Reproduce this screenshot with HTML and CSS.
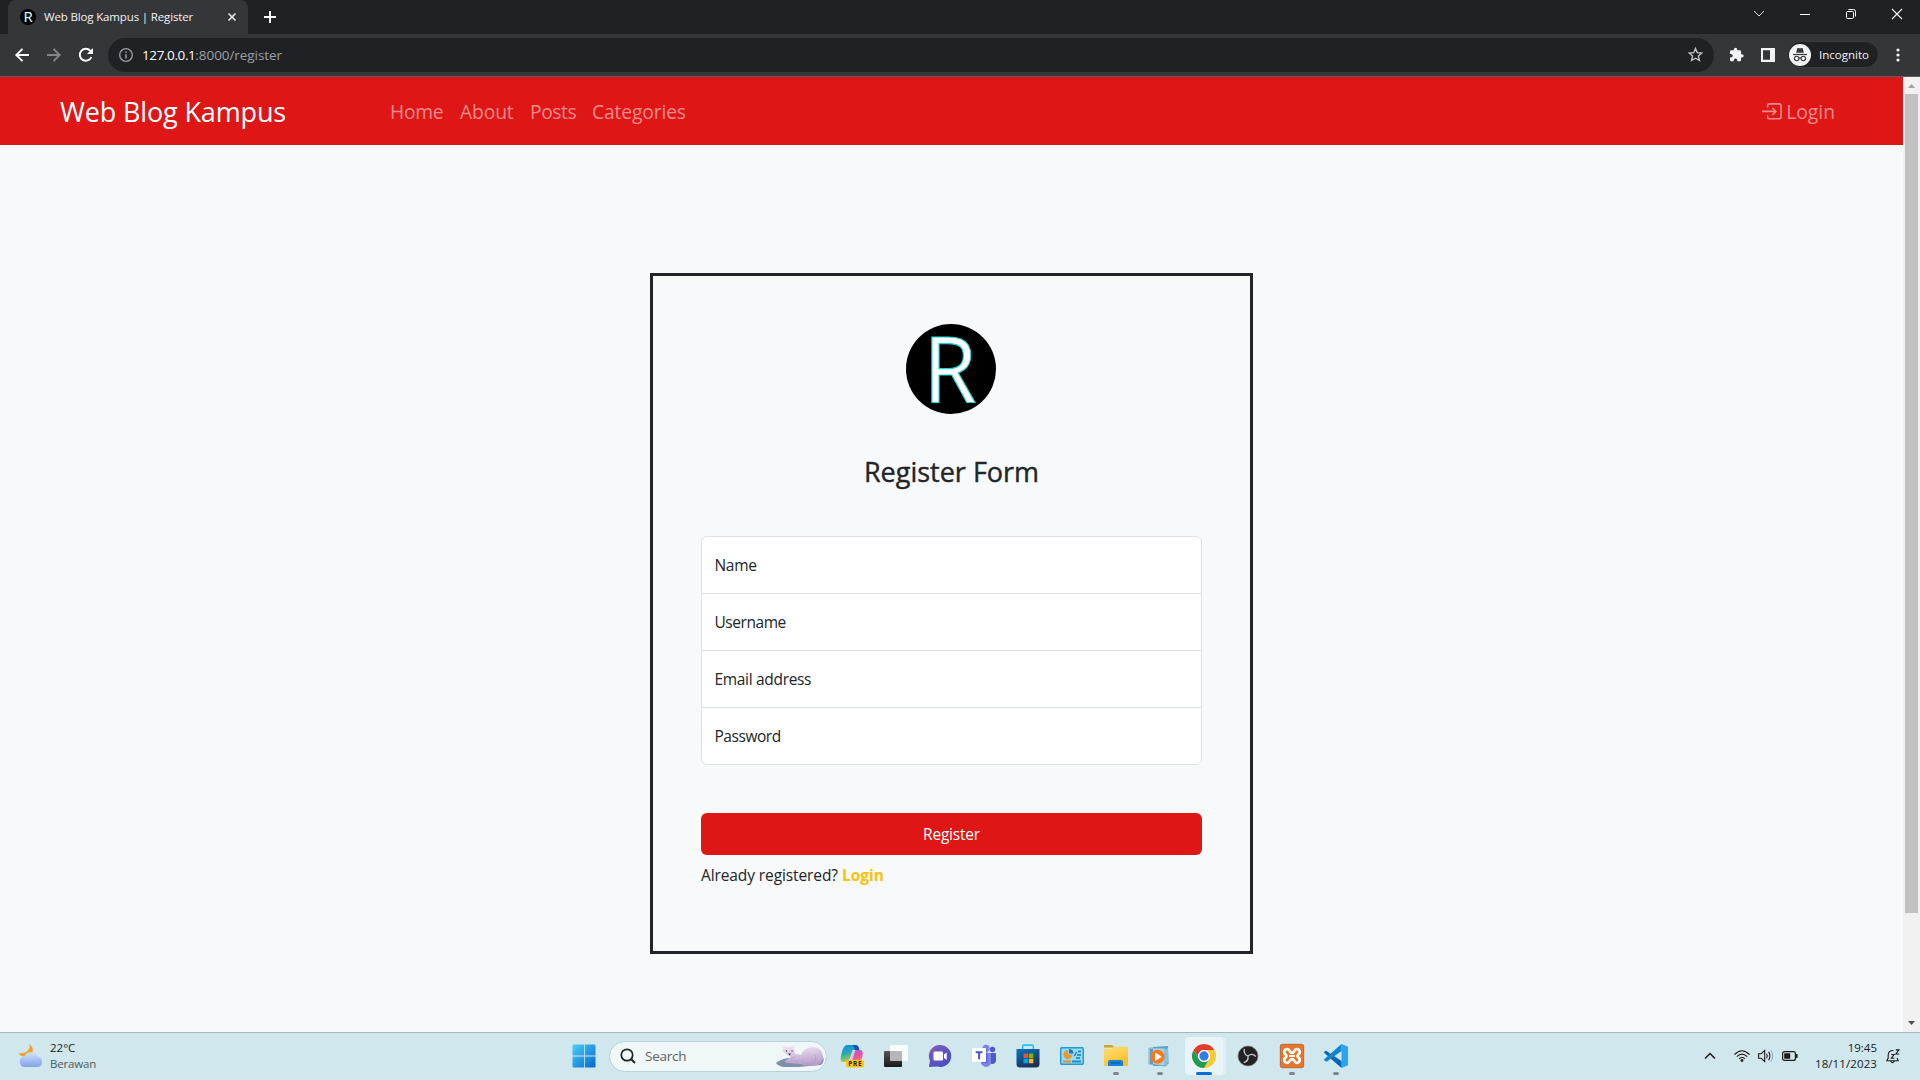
FILE: index.html
```html
<!DOCTYPE html>
<html lang="id">
<head>
<meta charset="utf-8">
<title>Web Blog Kampus | Register</title>
<link rel="stylesheet" href="styles.css">
</head>
<body>
<div class="desktop">
  <header class="tabstrip">
    <div class="tab">
      <svg class="favicon" viewBox="0 0 90 90"><circle cx="45" cy="45" r="45" fill="#000"/><text class="logo-letter small-letter" x="20" y="75" textLength="52" lengthAdjust="spacingAndGlyphs">R</text></svg>
      <span class="tab-title">Web Blog Kampus | Register</span>
      <svg class="tab-close" viewBox="0 0 8 8"><path d="M.5.5l7 7M7.500.5l-7 7" stroke="#e8eaed" stroke-width="1.6"/></svg>
    </div>
    <svg class="new-tab" viewBox="0 0 12 12"><path d="M6 0v12M0 6h12" stroke="#fff" stroke-width="1.9"/></svg>
    <div class="window-buttons">
      <svg viewBox="0 0 10 10"><path d="M0 2l5 5 5-5" fill="none" stroke="#ddd"/></svg>
      <svg viewBox="0 0 10 10"><path d="M0 5.500h10" stroke="#fff"/></svg>
      <svg viewBox="0 0 10 10"><rect x=".5" y="2.500" width="7" height="7" rx="1.200" fill="none" stroke="#fff"/><path d="M2.500.5h5a2 2 0 012 2v5" fill="none" stroke="#fff"/></svg>
      <svg viewBox="0 0 10 10"><path d="M0 0l10 10M10 0L0 10" stroke="#fff" stroke-width="1.100"/></svg>
    </div>
  </header>
  <div class="toolbar">
    <div class="nav-buttons">
      <svg viewBox="0 0 14 14"><path d="M14 7H1.500M7.500.8L1.300 7l6.200 6.200" fill="none" stroke="#fff" stroke-width="1.900"/></svg>
      <svg viewBox="0 0 14 14"><path d="M0 7h12.500M6.500.8L12.700 7l-6.200 6.200" fill="none" stroke="#85868a" stroke-width="1.900"/></svg>
      <svg viewBox="0 0 14 14"><path d="M12.400 9A6 6 0 1111.400 2.900L12.500 4.200" fill="none" stroke="#fff" stroke-width="1.900"/><path d="M14 0v6H8z" fill="#fff"/></svg>
    </div>
    <div class="omnibox">
      <svg class="info" viewBox="0 0 14 14"><circle cx="7" cy="7" r="6.300" fill="none" stroke="#9aa0a6" stroke-width="1.300"/><path d="M7 6.200v4.300M7 3.500v1.600" stroke="#9aa0a6" stroke-width="1.500"/></svg>
      <span class="url"><span class="host">127.0.0.1</span><span class="path">:8000/register</span></span>
      <svg class="star" viewBox="0 0 14 14"><path d="M7 1.300l1.600 3.900 4.300.4-3.200 2.800 1 4.200L7 10.400l-3.700 2.200 1-4.200L1.100 5.600l4.300-.4z" fill="none" stroke="#c4c7ca" stroke-width="1.200"/></svg>
    </div>
    <svg class="puzzle" viewBox="1 0 22 23"><path d="M20.500 11H19V7a2 2 0 00-2-2h-4V3.500a2.500 2.500 0 00-5 0V5H4a2 2 0 00-2 2v3.800h1.500a2.700 2.700 0 010 5.400H2V20a2 2 0 002 2h3.800v-1.500a2.700 2.700 0 015.400 0V22H17a2 2 0 002-2v-4h1.500a2.500 2.500 0 000-5z" fill="#f1f3f4"/></svg>
    <svg class="panel" viewBox="0 0 14 14"><path d="M0 0h14v14H0zM2 2.200v9.600h7V2.200z" fill="#f1f3f4" fill-rule="evenodd"/></svg>
    <div class="incognito">
      <svg viewBox="0 0 22 22"><circle cx="11" cy="11" r="11" fill="#f1f3f4"/><path d="M7.200 8.800l1-4.200q.2-.7 1-.5l1.800.5 1.800-.5q.8-.2 1 .5l1 4.200z" fill="#35363a"/><path d="M4 10.500h14" stroke="#35363a" stroke-width="1.200"/><g fill="none" stroke="#35363a" stroke-width="1.100"><circle cx="7.700" cy="14.500" r="2.200"/><circle cx="14.300" cy="14.500" r="2.200"/><path d="M9.900 14.200q1.100-.8 2.200 0"/></g></svg>
      <span class="incognito-label">Incognito</span>
    </div>
    <svg class="dots" viewBox="0 0 4 14"><g fill="#f1f3f4"><circle cx="2" cy="2" r="1.600"/><circle cx="2" cy="7" r="1.600"/><circle cx="2" cy="12" r="1.600"/></g></svg>
  </div>
  <div class="viewport">
    <div class="page">
      <nav class="navbar">
        <a class="brand">Web Blog Kampus</a>
        <div class="links">
          <a class="l-home">Home</a><a class="l-about">About</a><a class="l-posts">Posts</a><a class="l-cat">Categories</a>
        </div>
        <a class="nav-login">
          <svg viewBox="0 0 20 17"><path d="M5.600 4.500V2.600Q5.600.9 7.300.9h10Q19 .9 19 2.600v11.500q0 1.700-1.700 1.700h-10q-1.700 0-1.700-1.700v-1.900M0 8.400h13.500M10.300 4.800l3.600 3.600-3.600 3.600" fill="none" stroke="#f08b8b" stroke-width="1.600"/></svg>
          <span class="nav-login-text">Login</span>
        </a>
      </nav>
      <main class="main">
        <form class="card">
          <svg class="logo" viewBox="0 0 90 90"><circle cx="45" cy="45" r="45" fill="#000"/><text class="logo-letter" x="17.500" y="78" textLength="53" lengthAdjust="spacingAndGlyphs">R</text></svg>
          <h1 class="title">Register Form</h1>
          <div class="fields">
            <label class="f-name">Name</label>
            <label class="f-user">Username</label>
            <label class="f-email">Email address</label>
            <label class="f-pass">Password</label>
          </div>
          <button class="submit" type="button">Register</button>
          <p class="hint"><span class="hint-text">Already registered?</span><a class="hint-link">Login</a></p>
        </form>
      </main>
    </div>
    <div class="scrollbar">
      <svg viewBox="0 0 17 17"><path d="M5 11h7L8.500 7z" fill="#a3a3a3"/></svg>
      <div class="thumb"></div>
      <svg viewBox="0 0 17 17"><path d="M5 6h7l-3.500 4z" fill="#505050"/></svg>
    </div>
  </div>
  <footer class="taskbar">
    <div class="weather">
      <svg viewBox="0 0 24 24"><defs><linearGradient id="cl" x2="0" y2="1"><stop offset="0" stop-color="#d3e1fb"/><stop offset="1" stop-color="#7fa3e6"/></linearGradient></defs><path d="M10.500 0q5 4 2.500 9-4 6-11.500 2.500Q0 10.500.5 9q7 1 9.500-4 1-2.500.5-5z" fill="#f59f24"/><path d="M5.500 23a5.300 5.300 0 01-.3-10.500 7.200 7.200 0 0113.200 0A5.300 5.300 0 0118.500 23z" fill="url(#cl)"/></svg>
      <div class="lines"><span class="w-temp">22°C</span><span class="w-desc">Berawan</span></div>
    </div>
    <div class="apps">
      <div class="app"><svg viewBox="0 0 24 24"><defs><linearGradient id="wn" gradientUnits="userSpaceOnUse" x1="0" y1="0" x2="24" y2="24"><stop offset="0" stop-color="#4fd0fb"/><stop offset="1" stop-color="#0067cb"/></linearGradient></defs><path d="M1.500.5h10.700v11H.5v-10a1 1 0 011-1zM13 .5h9.500a1 1 0 011 1v10H13zM.5 12.400h11.700v11.100H1.500a1 1 0 01-1-1zM13 12.400h10.500v10.100a1 1 0 01-1 1H13z" fill="url(#wn)"/></svg></div>
      <div class="search">
        <svg class="glass" viewBox="0 0 16 16"><circle cx="7" cy="7" r="5.700" fill="none" stroke="#222" stroke-width="1.700"/><path d="M11 11l4 4" stroke="#222" stroke-width="2" /></svg>
        <span class="search-text">Search</span>
        <svg class="bear" viewBox="0 0 48 22"><defs><linearGradient id="br" x2=".2" y2="1"><stop offset="0" stop-color="#f6e9f6"/><stop offset="1" stop-color="#b8a0cc"/></linearGradient></defs><path d="M0 18q5-4 12-5l34-2q4 4-1 9l-23 2H8q-6-1-8-4z" fill="#7e91a9"/><path d="M25 10q2-7 11-8 10 0 11 9 0 7-5 9-12 2-18-1l-12-1q-3 0-3-2l6-4-5-3Q5 6 7 4 5 1 7.500.8q2-.3 2.500 1.200l5-.5q1.500-2 3-.5 1 1 0 2.500 1 3 1 5 3 0 6 1.500z" fill="url(#br)"/><path d="M10 17q7-2 12-1m3-1q3 4 9 3 8-2 5-8M14 13q3 1 5-1" fill="none" stroke="#b59dc6" stroke-width=".9"/><path d="M12 8.500h3l-1.300 2z" fill="#333"/><circle cx="10.500" cy="6" r=".7" fill="#333"/><circle cx="16" cy="6" r=".7" fill="#333"/></svg>
      </div>
      <div class="app"><svg viewBox="0 0 24 24"><defs><linearGradient id="ca" x2=".3" y2="1"><stop offset="0" stop-color="#1687dc"/><stop offset=".5" stop-color="#22a8b8"/><stop offset="1" stop-color="#b5cf3c"/></linearGradient><linearGradient id="cb" x2=".3" y2="1"><stop offset="0" stop-color="#a45cf0"/><stop offset=".5" stop-color="#e452a3"/><stop offset="1" stop-color="#ff8a50"/></linearGradient></defs><path d="M7 1h8.500q2.500 0 3.300 3l.5 2H15q-2 0-2.700 2.500L10 15.500q-.8 2.500-3 2.500H3.500q-3.500 0-2.800-4.500Q2 6 4 3q1-2 3-2z" fill="url(#ca)"/><path d="M12.300 1h3.200q2.500 0 3.300 3l.5 2H15q-1-4-2.700-5z" fill="#1b4fb8"/><path d="M15.500 6H20q3 0 2.700 4-.7 6-2.300 9-1 2-3.400 2H9q-2 0-2.500-2.500l-.3-.8Q9 18 10 15.500L12.300 8.500Q13 6 15.500 6z" fill="url(#cb)"/><path d="M15.500 6h-3L9.500 15.500q-.6 2-2 2.400h3q1.300-.5 1.800-2z" fill="#d9eef5" opacity=".75"/><rect x="6" y="16" width="18" height="7.500" rx="2" fill="#ffc60a"/><text class="pre" x="8.200" y="22" textLength="13.500">PRE</text></svg></div>
      <div class="app"><svg viewBox="0 0 24 24"><defs><linearGradient id="tv" x2="0" y2="1"><stop offset="0" stop-color="#555"/><stop offset="1" stop-color="#181818"/></linearGradient></defs><rect y="7" width="18" height="16" rx="1" fill="url(#tv)"/><rect x="6" y="1" width="18" height="16" rx="1" fill="#fff" fill-opacity=".86"/><path d="M6 7h12v10H6z" fill="#aaa" opacity=".8"/></svg></div>
      <div class="app"><svg viewBox="0 0 24 24"><defs><linearGradient id="ch" x2=".8" y2="1"><stop offset="0" stop-color="#9b5aa8"/><stop offset=".4" stop-color="#6458c4"/><stop offset="1" stop-color="#4750c0"/></linearGradient></defs><path d="M12 1a11 11 0 11-3 21.500L1.500 23q-.8 0-.5-1l1-5A11 11 0 0112 1z" fill="url(#ch)"/><rect x="5.500" y="7.500" width="9.500" height="9" rx="1.300" fill="#fff"/><path d="M16 10.500l2.700-2v7.500L16 14z" fill="#fff"/></svg></div>
      <div class="app"><svg viewBox="0 0 24 24"><circle cx="20.500" cy="5.500" r="2.700" fill="#5059c9"/><circle cx="14" cy="4.200" r="3.500" fill="#7b83eb"/><path d="M18 9h6v7q0 4-4 4-2 0-2-1z" fill="#5059c9"/><path d="M9 9h10v8.500q0 5-5 5.500-4-.5-5-4z" fill="#7b83eb"/><path d="M14 6h1.500v13H10v-2h4z" fill="#4146a8" opacity=".5"/><rect y="4" width="14" height="14" rx=".8" fill="#fff"/><path d="M3.700 7.300h6.800v1.900H8.100v6H6.100v-6H3.700z" fill="#4b53bc"/></svg></div>
      <div class="app"><svg viewBox="0 0 24 24"><defs><linearGradient id="st" x2=".5" y2="1"><stop offset="0" stop-color="#0875c4"/><stop offset="1" stop-color="#1c3158"/></linearGradient></defs><path d="M6.700 6V2q0-.9.900-.9h8.800q.9 0 .9.900v4" fill="none" stroke="#2bc0f2" stroke-width="1.600"/><path d="M.5 5h23v15q0 3.500-3.500 3.500H4Q.5 23.500.5 20z" fill="url(#st)"/><path d="M7.500 9.500H12V14H7.500z" fill="#f25022"/><path d="M12.800 9.500h4.500V14h-4.500z" fill="#7fba00"/><path d="M7.500 14.800H12v4.500H7.500z" fill="#00a4ef"/><path d="M12.800 14.800h4.500v4.500h-4.500z" fill="#ffb900"/></svg></div>
      <div class="app"><svg viewBox="0 0 24 24"><rect x=".7" y="3.700" width="22.600" height="16.600" rx="1" fill="#8fddf8" stroke="#2796cf" stroke-width="1.400"/><path d="M8 6a4.500 4.500 0 104.500 4.500H8z" fill="#f7941d"/><path d="M9 5a4.500 4.500 0 014.500 4.500H9z" fill="#1976c5"/><path d="M14.500 12l2-4M18 7.500h3M17 11h4M16 14h4" stroke="#1976c5" stroke-width="1.300"/><path d="M3 17.500h8" stroke="#f28a1c" stroke-width="2"/><path d="M12 17.500h9" stroke="#2089cf" stroke-width="2"/></svg></div>
      <div class="app"><svg viewBox="0 0 24 24"><defs><linearGradient id="fe" x2=".5" y2="1"><stop offset="0" stop-color="#ffe07a"/><stop offset="1" stop-color="#f9c026"/></linearGradient></defs><path d="M0 2q0-1 1-1h7l2.500 2.500H0z" fill="#dba114"/><path d="M0 5h7l3-2.300h13q1 0 1 1V21q0 1-1 1H1q-1 0-1-1z" fill="url(#fe)"/><path d="M4 22v-4q0-2 2-2h11q2 0 2 2v4z" fill="#1b7fd3"/><path d="M7 19h9" stroke="#0b5da6" stroke-width="1.300"/></svg><i class="dot"></i></div>
      <div class="app"><svg viewBox="0 0 24 24"><path d="M5 3l15-1 1 17-3 3H5z" fill="#5ba3c9"/><path d="M1 4h16v18l-16-2z" fill="#a9d3e9" stroke="#5b9fc4" stroke-width=".7"/><path d="M18 5v16M20 4v15" stroke="#d2edf8" stroke-width=".8"/><path d="M2 5h3v15H2z" fill="#5f9dc3"/><circle cx="9.500" cy="12.700" r="7" fill="#f47a1f"/><path d="M7.200 8.500l6.700 4.200-6.700 4.200z" fill="#fff"/></svg><i class="dot"></i></div>
      <div class="app active"><svg viewBox="0 0 48 48"><circle cx="24" cy="24" r="24" fill="#fff"/><path d="M3.200 12A24 24 0 0144.800 12H24a12 12 0 00-10.400 18z" fill="#e33b2e"/><path d="M44.800 12A24 24 0 0124 48l10.400-18A12 12 0 0024 12z" fill="#fcc934"/><path d="M24 48A24 24 0 013.200 12l10.400 18a12 12 0 0020.800 0z" fill="#1e9e4c"/><circle cx="24" cy="24" r="11.800" fill="#fff"/><circle cx="24" cy="24" r="9.300" fill="#2f7de9"/></svg><i class="dot wide"></i></div>
      <div class="app"><svg viewBox="0 0 24 24"><circle cx="12" cy="12" r="10" fill="#222124" stroke="#777" stroke-width=".8"/><g fill="none" stroke="#c9c9cc" stroke-width="1.300"><path d="M12 12q-5-2-3.500-7"/><path d="M12 12q-5-2-3.500-7" transform="rotate(120 12 12)"/><path d="M12 12q-5-2-3.500-7" transform="rotate(240 12 12)"/></g></svg></div>
      <div class="app"><svg viewBox="0 0 24 24"><rect x=".3" y=".3" width="23.400" height="23.400" rx="2" fill="#ea7529" stroke="#ae5a2c" stroke-width=".8"/><path d="M8 5.300c-3.500-.7-5 3.200-2.500 5 1.300.9 1.300 2.500 0 3.400-2.500 1.800-1 5.700 2.500 5 2-.5 1.500-3.500 4-3.500s2 3 4 3.500c3.500.7 5-3.200 2.500-5-1.300-.9-1.300-2.500 0-3.400 2.500-1.800 1-5.700-2.500-5-2 .5-1.500 3.500-4 3.500s-2-3-4-3.500z" fill="none" stroke="#fff" stroke-width="2.700"/><path d="M9 12h6" stroke="#fff" stroke-width="2"/></svg><i class="dot"></i></div>
      <div class="app"><svg viewBox="0 0 24 24"><path d="M17.500 0L24 2.800v18.400L17.500 24z" fill="#2aa4ef"/><path d="M1.700 6.600L.4 7.700q-.6.600 0 1.300L17.500 24V17z" fill="#0067b3"/><path d="M1.700 17.400L.4 16.300q-.6-.6 0-1.300L17.500 0v7L3 17.400q-.6.400-1.300 0z" fill="#1183cf"/></svg><i class="dot"></i></div>
    </div>
    <div class="tray">
      <svg class="t-chev" viewBox="0 0 12 8"><path d="M1 6.500l5-5 5 5" fill="none" stroke="#1b1b1b" stroke-width="1.500"/></svg>
      <svg class="t-wifi" viewBox="0 0 16 12"><g fill="none" stroke="#1b1b1b" stroke-width="1.100"><path d="M.5 4.500q7.500-7.600 15 0M2.800 6.700q5.200-5 10.400 0M5.200 8.800q2.800-2.500 5.600 0"/></g><circle cx="8" cy="10.500" r="1.400" fill="#1b1b1b"/></svg>
      <svg class="t-vol" viewBox="0 0 16 14"><g fill="none" stroke="#1b1b1b" stroke-width="1.100"><path d="M.6 4.700h2.600L6.700 1.400v11.200L3.200 9.300H.6zM8.600 4.700q1.300 2.300 0 4.600M10.600 2.800q2.500 4.200 0 8.400"/><path d="M12.700 1.200q4 5.800 0 11.600" stroke="#9cb1b7"/></g></svg>
      <svg class="t-bat" viewBox="0 0 16 10"><rect x=".6" y=".6" width="12.800" height="8.800" rx="2" fill="none" stroke="#1b1b1b" stroke-width="1.200"/><rect x="2.200" y="2.200" width="6" height="5.600" rx=".5" fill="#1b1b1b"/><path d="M14.800 3v4" stroke="#1b1b1b" stroke-width="1.500"/></svg>
      <div class="lines clock"><span class="c-time">19:45</span><span class="c-date">18/11/2023</span></div>
      <svg class="t-bell" viewBox="0 0 14 15"><path d="M7.500 1.500Q2.500 1.200 2.200 6v3L.8 11.700h11.400L11 9M4.700 12q1.800 3.500 3.700 0" fill="none" stroke="#1b1b1b" stroke-width="1.100"/><path d="M5.300 5.500h2.800L5.300 9.200h3M9.800.9h3.200L9.800 5H13.200" fill="none" stroke="#1b1b1b" stroke-width="1.100"/></svg>
    </div>
  </footer>
</div>
</body>
</html>
```
FILE: styles.css
```css
* { box-sizing: border-box; }
body {
  margin: 0;
  font-family: "Open Sans", "Noto Sans", sans-serif;
  color: #212529;
  white-space: nowrap;
}
svg { display: block; flex: none; overflow: visible; }
.desktop {
  width: 1920px;
  height: 1080px;
  display: flex;
  flex-direction: column;
  overflow: hidden;
}

/* Browser window */
.tabstrip {
  height: 34px;
  flex: none;
  display: flex;
  align-items: center;
  padding-left: 8px;
  background: #202124;
}
.tab {
  width: 240px;
  height: 34px;
  display: flex;
  align-items: center;
  padding: 0 12px;
  border-radius: 8px 8px 0 0;
  background: #35363a;
}
.favicon { width: 16px; height: 16px; margin-right: 8px; }
.tab-title { color: #f1f3f4; font-size: 11.5px; letter-spacing: -.15px; flex: 1; padding-bottom: 2px; }
.tab-close { width: 8px; height: 8px; }
.new-tab { width: 12px; height: 12px; margin-left: 16px; }
.window-buttons { display: flex; gap: 36px; margin-left: auto; padding: 0 18px 6px 0; }
.window-buttons svg { width: 10px; height: 10px; }
.toolbar {
  height: 43px;
  flex: none;
  display: flex;
  align-items: center;
  padding: 0 20px 1px 15px;
  background: #35363a;
  border-bottom: 1px solid #5b5c60;
}
.nav-buttons { display: flex; gap: 18px; margin-right: 15px; }
.nav-buttons svg { width: 14px; height: 14px; }
.omnibox {
  width: 1606px;
  height: 34px;
  display: flex;
  align-items: center;
  padding: 0 11px;
  border-radius: 17px;
  background: #202124;
}
.info { width: 14px; height: 14px; margin-right: 9px; }
.url { flex: 1; display: flex; font-size: 13.5px; }
.host { color: #fff; letter-spacing: -.4px; }
.path { color: #9aa0a6; letter-spacing: -.06px; }
.star { width: 15px; height: 15px; }
.puzzle { width: 15px; height: 15px; margin-left: 15px; }
.panel { width: 14px; height: 14px; margin-left: 17px; }
.incognito {
  width: 92px;
  height: 27px;
  display: flex;
  align-items: center;
  gap: 8px;
  margin-left: 12px;
  padding-left: 1px;
  border: 1px solid #3c3d41;
  border-radius: 14px;
  background: #202124;
}
.incognito svg { width: 22px; height: 22px; }
.incognito-label { color: #f1f3f4; font-size: 11.5px; }
.dots { width: 4px; height: 14px; margin-left: auto; }

/* Page */
.viewport { flex: 1; display: flex; min-height: 0; }
.page { flex: 1; display: flex; flex-direction: column; background: #f8f9fb; }
.navbar {
  height: 68px;
  flex: none;
  display: flex;
  align-items: center;
  padding: 0 68px 0 60px;
  background: #df1616;
}
.brand { width: 330px; color: #fff; font-size: 27px; letter-spacing: -.15px; }
.links { display: flex; font-size: 19.3px; color: #f08b8b; letter-spacing: -.15px; }
.l-home { width: 70px; letter-spacing: -.3px; }
.l-about { width: 70px; }
.l-posts { width: 62px; letter-spacing: -.45px; }
.nav-login { display: flex; align-items: center; gap: 4px; margin-left: auto; font-size: 19.3px; color: #f08b8b; }
.nav-login svg { width: 20px; height: 17px; }
.main { flex: 1; display: flex; justify-content: center; align-items: flex-start; padding-top: 128px; }
.card {
  width: 603px;
  height: 681px;
  display: flex;
  flex-direction: column;
  padding: 48px;
  border: 3px solid #212529;
}
.logo { width: 90px; height: 90px; align-self: center; margin-right: 1px; }
.logo-letter {
  font: 500 92px "Open Sans", sans-serif;
  fill: #fff;
  stroke: #19d3d6;
  stroke-width: 1.2px;
}
.small-letter { font-size: 84px; }
.title {
  height: 34px;
  margin: 41px 0 47px;
  text-align: center;
  font-size: 27px;
  line-height: 34px;
  font-weight: 500;
  -webkit-text-stroke: .4px #212529;
}
.fields {
  border: 1px solid #dee2e6;
  border-radius: 6px;
  background: #fff;
}
.fields label {
  display: block;
  height: 57px;
  padding-left: 12.5px;
  font-size: 15.5px;
  letter-spacing: -.45px;
  line-height: 57px;
  border-bottom: 1px solid #dee2e6;
}
.fields .f-name, .fields .f-email { letter-spacing: -.32px; }
.fields label:last-child { height: 56px; border-bottom: 0; }
.submit {
  height: 42px;
  flex: none;
  margin-top: 48px;
  border: 0;
  border-radius: 6px;
  background: #df1616;
  color: #fff;
  font: 15.5px "Open Sans", sans-serif;
  letter-spacing: -.2px;
}
.hint { display: flex; gap: 4px; margin: 7px 0 0; font-size: 15.5px; line-height: 26px; letter-spacing: -.1px; }
.hint-link { color: #ffc107; font-weight: 700; letter-spacing: 0; }
.scrollbar {
  width: 17px;
  display: flex;
  flex-direction: column;
  align-items: center;
  background: #f1f1f1;
}
.scrollbar svg { width: 17px; height: 17px; }
.thumb { width: 13px; height: 819px; margin-bottom: auto; background: #c1c1c1; }

/* Taskbar */
.taskbar {
  height: 48px;
  flex: none;
  display: grid;
  grid-template-columns: 1fr 796px 1fr;
  align-items: center;
  padding: 0 20px 1px 20px;
  border-top: 1px solid #a3b6bb;
  background: #cfe7ed;
  font-size: 11.5px;
}
.weather { display: flex; align-items: center; gap: 7px; margin-left: -1px; }
.weather svg { width: 24px; height: 24px; }
.lines { display: flex; flex-direction: column; line-height: 16px; color: #1b1b1b; }
.w-desc { color: #52595c; letter-spacing: -.19px; }
.apps { display: flex; align-items: center; }
.app {
  position: relative;
  width: 44px;
  height: 38px;
  display: flex;
  align-items: center;
  justify-content: center;
}
.app svg { width: 24px; height: 24px; }
.active::before {
  content: "";
  position: absolute;
  inset: 0 3px;
  border-radius: 4px;
  background: #e9f4f8;
  box-shadow: 3px 0 0 #deeff4;
}
.active svg { position: relative; }
.dot { position: absolute; left: 19px; bottom: 0; width: 6px; height: 3px; border-radius: 2px; background: #7b898e; }
.wide { left: 14px; width: 16px; background: #0a6ccf; }
.pre { font: 700 6.5px "Open Sans", sans-serif; fill: #222; }
.search {
  width: 218px;
  height: 31px;
  display: flex;
  align-items: center;
  margin: 0 3px;
  padding: 0 2px 0 10px;
  border: 1px solid #b9d2d9;
  border-radius: 16px;
  background: #eff7f9;
}
.glass { width: 16px; height: 16px; margin-right: 9px; }
.search-text { flex: 1; font-size: 13.5px; letter-spacing: -.25px; color: #5c6264; }
.bear { width: 48px; height: 22px; }
.tray { display: flex; align-items: center; justify-content: flex-end; }
.t-chev { width: 12px; height: 8px; margin-right: 18px; }
.t-wifi { width: 16px; height: 12px; margin-right: 8px; }
.t-vol { width: 16px; height: 14px; margin-right: 8px; }
.t-bat { width: 16px; height: 10px; margin-right: 17px; }
.clock { align-items: flex-end; margin-right: 9px; }
.c-date { letter-spacing: .1px; }
.t-bell { width: 14px; height: 15px; }
```
